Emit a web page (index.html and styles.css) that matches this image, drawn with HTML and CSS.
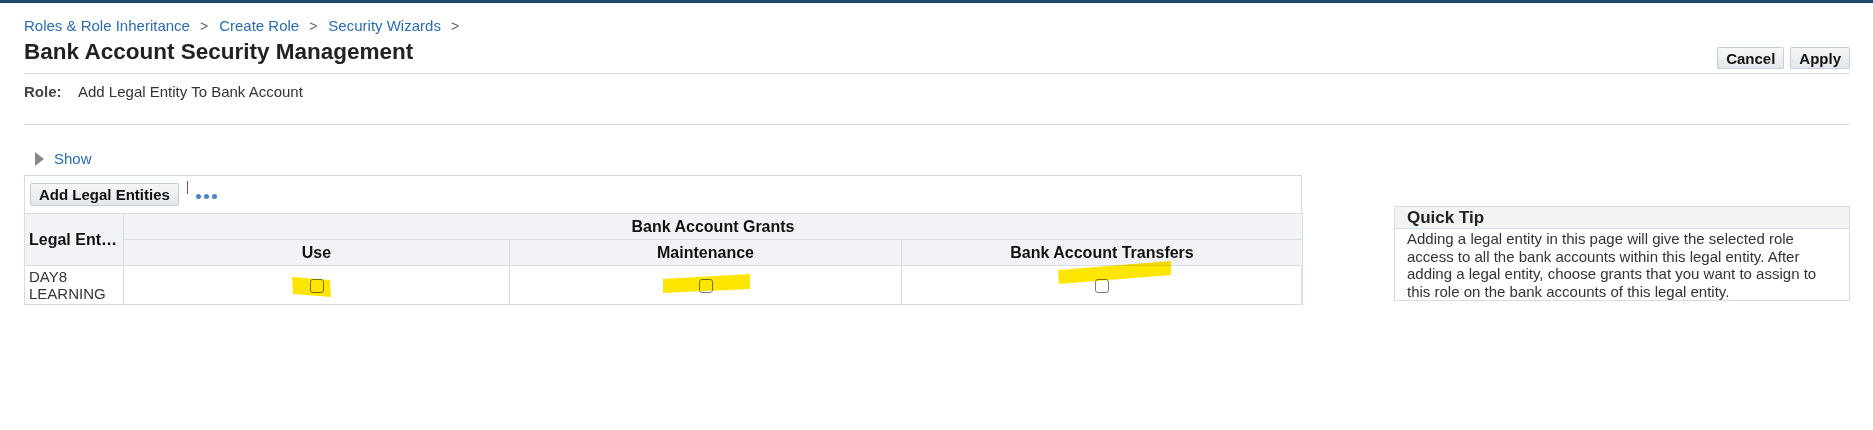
FILE: index.html
```html
<!DOCTYPE html>
<html lang="en">
<head>
  <meta charset="UTF-8" />
  <title>Bank Account Security Management</title>
  <link rel="stylesheet" href="styles.css">
</head>
<body>
  <div class="top-bar"></div>
  <div class="page">
    <div class="breadcrumbs">
      <a href="#">Roles &amp; Role Inheritance</a><span class="sep">&gt;</span>
      <a href="#">Create Role</a><span class="sep">&gt;</span>
      <a href="#">Security Wizards</a><span class="sep">&gt;</span>
    </div>

    <div class="title-row">
      <h1>Bank Account Security Management</h1>
      <div class="actions">
        <button class="btn">Cancel</button>
        <button class="btn">Apply</button>
      </div>
    </div>

    <div class="role-row">
      <span class="label">Role:</span>
      <span class="value">Add Legal Entity To Bank Account</span>
    </div>

    <div class="main">
      <div class="left">
        <div class="show">
          <span class="tri"></span>
          <a href="#">Show</a>
        </div>

        <div class="panel">
          <div class="toolbar">
            <button class="btn">Add Legal Entities</button>
            <span class="tb-sep"></span>
            <span class="more"><i></i><i></i><i></i></span>
          </div>
          <table class="grants">
            <colgroup>
              <col style="width: 99px">
              <col style="width: 386px">
              <col style="width: 392px">
              <col style="width: 401px">
            </colgroup>
            <thead>
              <tr>
                <th rowspan="2" class="entity-head">Legal Ent…</th>
                <th colspan="3">Bank Account Grants</th>
              </tr>
              <tr>
                <th>Use</th>
                <th>Maintenance</th>
                <th>Bank Account Transfers</th>
              </tr>
            </thead>
            <tbody>
              <tr>
                <td class="entity">DAY8<br>LEARNING</td>
                <td class="check"><span class="box"></span></td>
                <td class="check"><span class="box"></span></td>
                <td class="check"><span class="box"></span></td>
              </tr>
            </tbody>
          </table>
        </div>
      </div>

      <div class="tip">
        <div class="tip-head">Quick Tip</div>
        <div class="tip-body">Adding a legal entity in this page will give the selected role access to all the bank accounts within this legal entity. After adding a legal entity, choose grants that you want to assign to this role on the bank accounts of this legal entity.</div>
      </div>
    </div>
  </div>

  <!-- highlighter marks drawn over the screenshot -->
  <svg class="marks" width="1873" height="430" viewBox="0 0 1873 430">
    <polygon points="292,277 330,280 331,297 293,294" />
    <polygon points="663,279 750,274 750,289 663,293" />
    <polygon points="1058,270 1171,261 1171,275 1059,284" />
  </svg>
</body>
</html>
```

FILE: styles.css
```css
* {
  margin: 0;
  padding: 0;
  box-sizing: border-box;
}

body {
  font-family: 'Liberation Sans', Arial, sans-serif;
  font-size: 15px;
  line-height: 18px;
  color: #333;
  background: #fff;
  position: relative;
  min-height: 430px;
}

a {
  color: #2b6cb0;
  text-decoration: none;
}

.top-bar {
  height: 3px;
  background: #1f4a70;
}

.page {
  padding: 14px 23px 0 24px;
}

.breadcrumbs {
  display: flex;
  align-items: center;
}

.breadcrumbs .sep {
  color: #666;
  padding: 0 11px 0 10px;
  font-size: 14px;
}

.title-row {
  display: flex;
  justify-content: space-between;
  align-items: flex-end;
  margin-top: 4px;
  padding-bottom: 4px;
  border-bottom: 1px solid #d9dee3;
}

.title-row h1 {
  font-size: 22.5px;
  line-height: 26px;
  color: #222;
  margin-bottom: 4px;
}

.actions {
  display: flex;
  gap: 6px;
}

.btn {
  font-family: inherit;
  font-size: 15px;
  font-weight: bold;
  color: #111;
  height: 23px;
  padding: 0 8px;
  background: linear-gradient(#f6f7f9, #e3e7eb);
  border: 1px solid #c5cdd5;
  border-radius: 2px;
}

.actions .btn {
  height: 22px;
}

.role-row {
  padding: 9px 0 23px;
  border-bottom: 1px solid #d9dee3;
  display: flex;
}

.role-row .label {
  font-weight: bold;
  color: #444;
  width: 54px;
}

.main {
  display: flex;
  align-items: flex-start;
}

.left {
  width: 1278px;
  padding-top: 25px;
}

.show {
  display: flex;
  align-items: center;
  height: 18px;
  margin-bottom: 7px;
}

.show .tri {
  width: 0;
  height: 0;
  border-top: 7px solid transparent;
  border-bottom: 7px solid transparent;
  border-left: 9px solid #888;
  margin: 0 10px 0 11px;
}

.panel {
  border: 1px solid #d6dde4;
  border-bottom: none;
}

.toolbar {
  display: flex;
  align-items: flex-start;
  padding: 7px 5px 7px;
}

.tb-sep {
  width: 1px;
  height: 13px;
  background: #6f4a8e;
  margin: -2px 0 0 8px;
}

.more {
  display: flex;
  gap: 3px;
  margin: 11px 0 0 8px;
}

.more i {
  width: 5px;
  height: 5px;
  border-radius: 50%;
  background: #4f86c2;
}

.grants {
  width: 1278px;
  margin-left: -1px;
  table-layout: fixed;
  border-collapse: collapse;
}

.grants th,
.grants td {
  border: 1px solid #d6dde4;
}

.grants th {
  background: #f1f3f6;
  font-size: 16px;
  font-weight: bold;
  color: #111;
  height: 26px;
  text-align: center;
  white-space: nowrap;
}

.grants th.entity-head {
  text-align: left;
  padding-left: 4px;
  overflow: hidden;
}

.grants td {
  height: 39px;
}

.grants td.entity {
  padding-left: 4px;
  line-height: 17px;
  color: #333;
}

.grants td.check {
  text-align: center;
}

.box {
  display: inline-block;
  width: 14px;
  height: 14px;
  border: 1.5px solid #7a7a7a;
  border-radius: 3px;
  vertical-align: middle;
  background: #fff;
}

.tip {
  width: 457px;
  margin: 81px 0 0 92px;
  border: 1px solid #d6dde4;
}

.tip-head {
  background: #f2f3f5;
  border-bottom: 1px solid #d6dde4;
  font-size: 17px;
  font-weight: bold;
  color: #222;
  height: 22px;
  line-height: 21px;
  padding-left: 12px;
}

.tip-body {
  padding: 1px 22px 0 12px;
  line-height: 17.5px;
  color: #333;
}

.marks {
  position: absolute;
  top: 0;
  left: 0;
  pointer-events: none;
  mix-blend-mode: multiply;
}

.marks polygon {
  fill: #ffe600;
}
```
